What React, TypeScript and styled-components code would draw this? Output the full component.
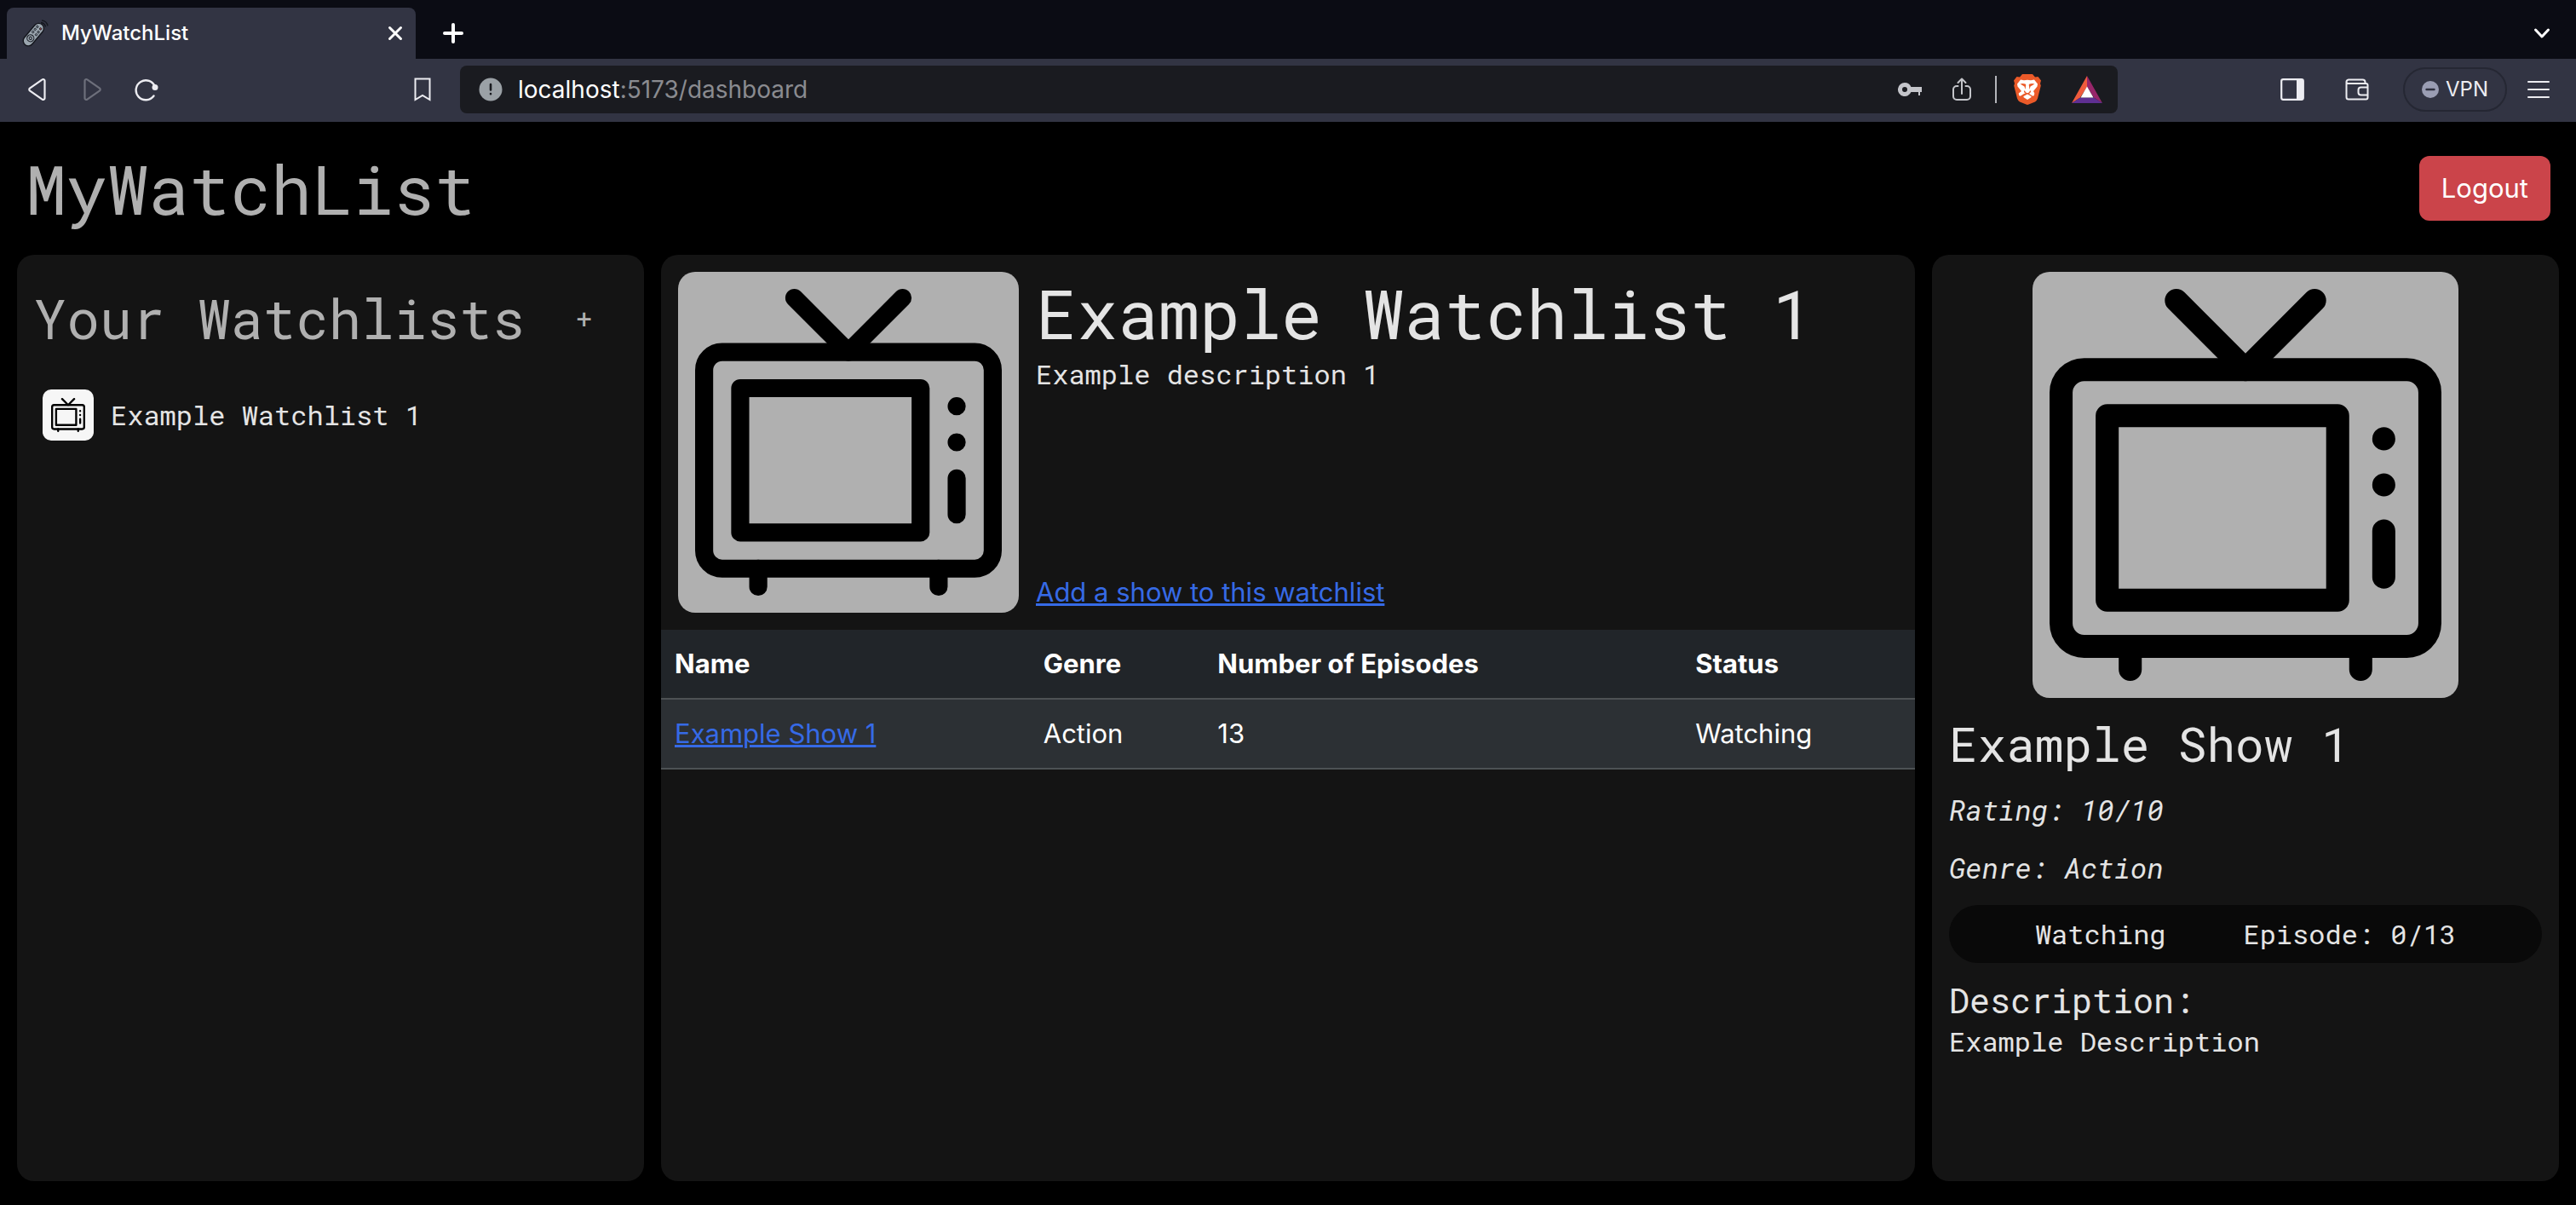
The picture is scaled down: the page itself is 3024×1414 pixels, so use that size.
import React from "react";
import styled, { createGlobalStyle } from "styled-components";

const mono = '"Roboto Mono", "Liberation Mono", monospace';
const sans = 'Inter, "Liberation Sans", sans-serif';

const GlobalStyle = createGlobalStyle`
  *, *::before, *::after { box-sizing: border-box; }
  body {
    margin: 0;
    background: #000;
    color: #e4e4e4;
    font-family: ${mono};
    font-size: 32px;
    font-weight: 450;
    line-height: 48px;
  }
  h1, h2, h3, p { margin: 0; font-weight: inherit; }
  button { font: inherit; color: inherit; background: none; border: 0; padding: 0; }
  svg { display: block; flex: none; }
`;

const Screen = styled.div`
  min-height: 100vh;
  display: flex;
  flex-direction: column;
`;

/* ---------- Browser window ---------- */

const TabStrip = styled.div`
  height: 69px;
  display: flex;
  align-items: flex-end;
  padding: 0 30px 0 8px;
  background: #0b0c14;
  color: #fff;
`;

const Tab = styled.div`
  width: 480px;
  height: 60px;
  display: flex;
  align-items: center;
  padding: 0 15px 0 16px;
  background: #323443;
  border-radius: 8px 8px 0 0;
  font: 500 24px/30px ${sans};
`;

const TabTitle = styled.span`
  flex: 1;
  padding-left: 15px;
`;

const StripButton = styled.button<{ $end?: boolean }>`
  height: 60px;
  display: flex;
  align-items: center;
  margin-left: ${(p) => (p.$end ? "auto" : "32px")};
`;

const Toolbar = styled.div`
  height: 74px;
  display: flex;
  align-items: center;
  gap: 48px;
  padding: 0 31px 2px 30px;
  background: #323443;
  color: #ececf1;
`;

const NavButtons = styled.div`
  flex: 0 1 476px;
  display: flex;
  align-items: center;
  gap: 36px;
`;

const IconButton = styled.button<{ $push?: boolean; $dim?: boolean }>`
  display: flex;
  margin-left: ${(p) => (p.$push ? "auto" : "0")};
  color: ${(p) => (p.$dim ? "#6d6f7b" : "inherit")};
`;

const AddressBar = styled.div`
  flex: 1;
  height: 56px;
  display: flex;
  align-items: center;
  gap: 36px;
  margin-left: -14px;
  padding: 0 18px 0 22px;
  background: #1a1b20;
  border-radius: 8px;
  color: #c4c5ca;
`;

const Address = styled.div`
  flex: 1;
  margin-left: -18px;
  color: #8a8b90;
  font: 400 28px/36px ${sans};
`;

const Host = styled.span`
  color: #fff;
`;

const Divider = styled.span`
  width: 2px;
  height: 32px;
  margin: 0 -16px 0 -8px;
  background: #b4b5ba;
`;

const ToolButtons = styled.div`
  flex: 0 1 459px;
  display: flex;
  align-items: center;
  justify-content: flex-end;
  gap: 48px;
`;

const VpnButton = styled.button`
  height: 52px;
  display: flex;
  align-items: center;
  gap: 8px;
  margin: 0 -24px 0 -8px;
  padding: 0 20px;
  border: 2px solid #252733;
  border-radius: 26px;
  font: 400 24px/30px ${sans};
`;

/* ---------- Page ---------- */

const Header = styled.header`
  display: flex;
  align-items: center;
  justify-content: space-between;
  padding: 30px;
`;

const SiteTitle = styled.h1`
  color: #b0b0b0;
  font-size: 80px;
  font-weight: 400;
  line-height: 96px;
`;

const LogoutButton = styled.button`
  padding: 14px 26px;
  background: #cb444a;
  border-radius: 12px;
  color: #fff;
  font-family: ${sans};
  font-size: 31px;
  font-weight: 400;
`;

const Columns = styled.main`
  flex: 1;
  display: grid;
  grid-template-columns: 1fr 2fr 1fr;
  gap: 20px;
  padding: 0 20px 28px;
`;

const Panel = styled.section<{ $inset?: boolean }>`
  min-width: 0;
  padding: ${(p) => (p.$inset ? "20px" : "0")};
  background: #141414;
  border-radius: 20px;
`;

const ListsHeading = styled.div`
  height: 108px;
  display: flex;
  align-items: center;
  gap: 34px;
  color: #b0b0b0;
  font-weight: 400;
`;

const ListsTitle = styled.h2`
  font-size: 64px;
  line-height: 76px;
`;

const AddButton = styled.button`
  padding: 14px 26px;
`;

const Lists = styled.ul`
  margin: 20px 0 0;
  padding: 0;
  list-style: none;
`;

const ListButton = styled.button`
  width: 100%;
  display: flex;
  align-items: center;
  gap: 20px;
  padding: 10px;
  text-align: left;
`;

const Poster = styled.div<{ $size: number; $small?: boolean }>`
  flex: none;
  width: ${(p) => p.$size}px;
  max-width: 100%;
  aspect-ratio: 1;
  padding: ${(p) => (p.$small ? 10 : 20)}px;
  background: ${(p) => (p.$small ? "#f6f6f6" : "#b0b0b0")};
  border-radius: ${(p) => (p.$small ? 10 : 20)}px;
`;

const ListSummary = styled.div`
  display: flex;
  gap: 20px;
  padding: 20px;
`;

const ListInfo = styled.div`
  display: flex;
  flex-direction: column;
  align-items: flex-start;
`;

const ListTitle = styled.h2`
  font-size: 80px;
  line-height: 96px;
`;

const Link = styled.a`
  color: #366ae6;
  font-family: ${sans};
  font-size: 31px;
  font-weight: 400;
  text-decoration: underline;
  text-decoration-thickness: 3px;
`;

const ListFooter = styled.div`
  margin-top: auto;
`;

const ShowTable = styled.table`
  width: 100%;
  table-layout: fixed;
  border-collapse: separate;
  border-spacing: 0;
  color: #fff;
  font-family: ${sans};
  font-size: 31px;
  font-weight: 400;
  text-align: left;
`;

const Column = styled.col<{ $share: number }>`
  width: ${(p) => p.$share}%;
`;

const HeadCell = styled.th`
  padding: 16px;
  background: #212529;
  border-bottom: 2px solid #4d5154;
  font-weight: 700;
`;

const Cell = styled.td`
  padding: 16px;
  background: #2c3034;
  border-bottom: 2px solid #4d5154;
`;

const ShowPanel = styled(Panel)`
  display: flex;
  flex-direction: column;
  gap: 20px;
`;

const PosterFrame = styled.div`
  display: flex;
  justify-content: center;
`;

const ShowTitle = styled.h2`
  font-size: 56px;
  line-height: 67px;
`;

const Fact = styled.p`
  font-size: 33px;
  font-style: italic;
`;

const Progress = styled.div`
  display: flex;
  justify-content: space-evenly;
  padding: 10px;
  background: #090909;
  border-radius: 34px;
`;

const DescriptionTitle = styled.h3`
  font-size: 40px;
  line-height: 48px;
`;

/* ---------- Drawings ---------- */

const Television = () => (
  <svg viewBox="0 0 17 17" width="100%" height="100%" fill="none" stroke="#000" strokeLinecap="round" strokeLinejoin="round" aria-hidden="true">
    <path d="M5.5.5l3 3 3-3" />
    <rect x=".5" y="3.5" width="16" height="12" rx="1" />
    <rect x="2.5" y="5.5" width="10" height="8" />
    <path d="M14.5 6.5v0M14.5 8.5v0M14.5 10.5v2M3.5 15.5v1M13.5 15.5v1" />
  </svg>
);

const RemoteIcon = () => (
  <svg width="33" height="33" viewBox="0 0 33 33" aria-hidden="true">
    <g transform="rotate(40 15 18)">
      <rect x="9" y="2" width="12" height="31" rx="6" fill="#9aa5ae" stroke="#14161d" strokeWidth="1.4" />
      <circle cx="15" cy="23" r="4" fill="none" stroke="#20232c" strokeWidth="1.2" />
      <circle cx="15" cy="23" r="1.6" fill="none" stroke="#20232c" />
      <g fill="#7b8790" stroke="#20232c" strokeWidth=".9">
        <circle cx="12.5" cy="15.5" r="1.2" /><circle cx="17.5" cy="15.5" r="1.2" />
        <circle cx="12.5" cy="11.5" r="1.2" /><circle cx="17.5" cy="11.5" r="1.2" />
        <circle cx="12.5" cy="7.5" r="1.2" /><circle cx="17" cy="7" r="1.2" fill="#a8433f" />
      </g>
    </g>
    <path d="M24 3.5q4.5 .5 5.5 5M25 .8q6 .8 7 6.5" fill="none" stroke="#14161d" strokeWidth="1.3" />
  </svg>
);

const CloseIcon = () => (
  <svg width="18" height="18" viewBox="0 0 18 18" fill="none" stroke="currentColor" strokeWidth="3" strokeLinecap="round" aria-hidden="true">
    <path d="M2.5 2.5l13 13M15.5 2.5l-13 13" />
  </svg>
);

const PlusIcon = () => (
  <svg width="24" height="24" viewBox="0 0 24 24" fill="none" stroke="currentColor" strokeWidth="4" strokeLinecap="round" aria-hidden="true">
    <path d="M12 2v20M2 12h20" />
  </svg>
);

const ChevronIcon = () => (
  <svg width="20" height="14" viewBox="0 0 20 14" fill="none" stroke="currentColor" strokeWidth="3" strokeLinecap="round" strokeLinejoin="round" aria-hidden="true">
    <path d="M2.5 3l7.5 8 7.5-8" />
  </svg>
);

const TriangleIcon = ({ flip = false }: { flip?: boolean }) => (
  <svg width="28" height="28" viewBox="0 0 28 28" fill="none" stroke="currentColor" strokeWidth="2.2" strokeLinejoin="round" aria-hidden="true">
    <path
      transform={flip ? "matrix(-1 0 0 1 28 0)" : undefined}
      d="M22.5 3.8v20.4a1.8 1.8 0 0 1-2.9 1.4L4.9 15.3a1.7 1.7 0 0 1 0-2.6L19.6 2.4a1.8 1.8 0 0 1 2.9 1.4z"
    />
  </svg>
);

const ReloadIcon = () => (
  <svg width="28" height="28" viewBox="0 0 28 28" fill="none" stroke="currentColor" strokeWidth="2.4" strokeLinecap="round" aria-hidden="true">
    <path d="M22.5 21.5A11.5 11.5 0 1 1 24 11" />
    <circle cx="24" cy="11.5" r="3.5" fill="currentColor" stroke="none" />
  </svg>
);

const BookmarkIcon = () => (
  <svg width="20" height="28" viewBox="0 0 20 28" fill="none" stroke="currentColor" strokeWidth="2" aria-hidden="true">
    <path d="M1.5 1.5h17v24.5L10 20.8 1.5 26z" />
  </svg>
);

const InfoIcon = () => (
  <svg width="28" height="28" viewBox="0 0 28 28" aria-hidden="true">
    <circle cx="14" cy="14" r="13.5" fill="#9ba1a6" />
    <path d="M14 8v6.5M14 19v.2" stroke="#1a1b20" strokeWidth="2.6" strokeLinecap="round" />
  </svg>
);

const KeyIcon = () => (
  <svg width="28" height="16" viewBox="0 0 28 16" aria-hidden="true">
    <path fill="currentColor" fillRule="evenodd" d="M8 0a8 8 0 0 1 7.4 5H28v10h-4v-4h-8.6A8 8 0 1 1 8 0zm0 5a3 3 0 1 0 0 6 3 3 0 0 0 0-6zM26 11h2v4h-2z" />
  </svg>
);

const ShareIcon = () => (
  <svg width="22" height="28" viewBox="0 0 22 28" fill="none" stroke="currentColor" strokeWidth="2" strokeLinecap="round" strokeLinejoin="round" aria-hidden="true">
    <path d="M11 19V2M6.5 6L11 1.5 15.5 6M6.5 10H5a4 4 0 0 0-4 4v8a4 4 0 0 0 4 4h12a4 4 0 0 0 4-4v-8a4 4 0 0 0-4-4h-1.5" />
  </svg>
);

const BraveIcon = () => (
  <svg width="32" height="36" viewBox="0 0 32 36" aria-hidden="true">
    <path fill="#eb5a29" d="M10 0h12l3 3.5 3.5-.5L32 7.5l-1 3.5.8 2.5-3.8 15q-.8 2.5-3 4L17.5 35.500q-1.5.9-3 0L7 32.5q-2.200-1.5-3-4L.2 13.5 1 11 0 7.500 3.5 3 7 3.5z" />
    <path fill="#fff" d="M8 6.5l4 .8q4-.9 8 0l4-.8 4 5-.5 3-4.500 5.500 1.300 2.500q.3 2.500-2 3.300l-4.300-2.800-3-1-3 1-4.300 2.800q-2.300-.8-2-3.300L9 20 4.500 14.500l-.5-3z" />
    <path fill="#eb5a29" d="M7.5 11.500q3-1 6 0l.8 1-.8 5.500-1-3.500zM24.500 11.500q-3-1-6 0l-.8 1 .8 5.500 1-3.500z" />
    <path fill="none" stroke="#eb5a29" strokeWidth="1.300" d="M12.500 19.500q0 2.500 3.500 3.500 3.500-1 3.500-3.500" />
    <path fill="#fff" d="M16 23.500l4.500 2.500q.3.600-.2 1.200L16 30l-4.300-2.800q-.5-.6-.2-1.200z" />
  </svg>
);

const RewardsIcon = () => (
  <svg width="36" height="32" viewBox="0 0 36 32" aria-hidden="true">
    <path fill="#ef5b3c" d="M18 0v13l-8 12.5L0 32z" />
    <path fill="#97266a" d="M18 0l18 32-10-6.5L18 13z" />
    <path fill="#5f2f92" d="M0 32l10-6.5h16L36 32z" />
    <path fill="#fff" d="M18 12.5l7.5 13h-15z" />
  </svg>
);

const SidebarIcon = () => (
  <svg width="28" height="26" viewBox="0 0 28 26" aria-hidden="true">
    <rect x="1.2" y="1.2" width="25.6" height="23.6" rx="2" fill="none" stroke="currentColor" strokeWidth="2.2" />
    <path d="M19 1h7q1 0 1 1v22q0 1-1 1h-7z" fill="currentColor" />
  </svg>
);

const WalletIcon = () => (
  <svg width="28" height="26" viewBox="0 0 28 26" fill="none" stroke="currentColor" strokeWidth="2" strokeLinejoin="round" aria-hidden="true">
    <path d="M1.5 4V22a2.5 2.5 0 0 0 2.5 2.5h20.5a2 2 0 0 0 2-2V8a2 2 0 0 0-2-2H3.5Q1.5 6 1.5 4T4 1.5h16.5a3 3 0 0 1 3 3V6" />
    <path d="M26.5 10.5h-8a3 3 0 0 0-3 3v3a3 3 0 0 0 3 3h8" />
  </svg>
);

const VpnStateIcon = () => (
  <svg width="20" height="20" viewBox="0 0 20 20" aria-hidden="true">
    <circle cx="10" cy="10" r="10" fill="#9a9db3" />
    <path d="M5.5 10h9" stroke="#2f3140" strokeWidth="2.4" strokeLinecap="round" />
  </svg>
);

const MenuIcon = () => (
  <svg width="26" height="20" viewBox="0 0 26 20" fill="none" stroke="currentColor" strokeWidth="2" strokeLinecap="round" aria-hidden="true">
    <path d="M1 1h24M1 10h24M1 19h24" />
  </svg>
);

/* ---------- Data ---------- */

const watchlist = { name: "Example Watchlist 1", description: "Example description 1" };

const show = {
  name: "Example Show 1",
  genre: "Action",
  episodes: 13,
  watched: 0,
  rating: 10,
  status: "Watching",
  description: "Example Description",
};

const columns = [
  { label: "Name", share: 29.4 },
  { label: "Genre", share: 13.9 },
  { label: "Number of Episodes", share: 38.1 },
  { label: "Status", share: 18.6 },
];

const Browser = () => (
  <div>
    <TabStrip>
      <Tab>
        <RemoteIcon />
        <TabTitle>MyWatchList</TabTitle>
        <IconButton aria-label="Close tab"><CloseIcon /></IconButton>
      </Tab>
      <StripButton aria-label="New tab"><PlusIcon /></StripButton>
      <StripButton $end aria-label="Search tabs"><ChevronIcon /></StripButton>
    </TabStrip>
    <Toolbar>
      <NavButtons>
        <IconButton aria-label="Back"><TriangleIcon /></IconButton>
        <IconButton $dim aria-label="Forward"><TriangleIcon flip /></IconButton>
        <IconButton aria-label="Reload"><ReloadIcon /></IconButton>
        <IconButton $push aria-label="Bookmark this page"><BookmarkIcon /></IconButton>
      </NavButtons>
      <AddressBar>
        <InfoIcon />
        <Address><Host>localhost</Host>:5173/dashboard</Address>
        <IconButton aria-label="Passwords"><KeyIcon /></IconButton>
        <IconButton aria-label="Share"><ShareIcon /></IconButton>
        <Divider />
        <IconButton aria-label="Shields"><BraveIcon /></IconButton>
        <IconButton aria-label="Rewards"><RewardsIcon /></IconButton>
      </AddressBar>
      <ToolButtons>
        <IconButton aria-label="Sidebar"><SidebarIcon /></IconButton>
        <IconButton aria-label="Wallet"><WalletIcon /></IconButton>
        <VpnButton><VpnStateIcon />VPN</VpnButton>
        <IconButton aria-label="Menu"><MenuIcon /></IconButton>
      </ToolButtons>
    </Toolbar>
  </div>
);

export default function App() {
  return (
    <Screen>
      <GlobalStyle />
      <Browser />
      <Header>
        <SiteTitle>MyWatchList</SiteTitle>
        <LogoutButton>Logout</LogoutButton>
      </Header>
      <Columns>
        <Panel $inset>
          <ListsHeading>
            <ListsTitle>Your Watchlists</ListsTitle>
            <AddButton aria-label="Add a watchlist">+</AddButton>
          </ListsHeading>
          <Lists>
            <li>
              <ListButton>
                <Poster as="span" $size={60} $small><Television /></Poster>
                {watchlist.name}
              </ListButton>
            </li>
          </Lists>
        </Panel>

        <Panel>
          <ListSummary>
            <Poster $size={400}><Television /></Poster>
            <ListInfo>
              <ListTitle>{watchlist.name}</ListTitle>
              <p>{watchlist.description}</p>
              <ListFooter><Link href="#add-show">Add a show to this watchlist</Link></ListFooter>
            </ListInfo>
          </ListSummary>
          <ShowTable>
            <colgroup>
              {columns.map((c) => <Column key={c.label} $share={c.share} />)}
            </colgroup>
            <thead>
              <tr>{columns.map((c) => <HeadCell key={c.label} scope="col">{c.label}</HeadCell>)}</tr>
            </thead>
            <tbody>
              <tr>
                <Cell><Link href="#show">{show.name}</Link></Cell>
                <Cell>{show.genre}</Cell>
                <Cell>{show.episodes}</Cell>
                <Cell>{show.status}</Cell>
              </tr>
            </tbody>
          </ShowTable>
        </Panel>

        <ShowPanel $inset>
          <PosterFrame><Poster $size={500}><Television /></Poster></PosterFrame>
          <ShowTitle>{show.name}</ShowTitle>
          <Fact>Rating: {show.rating}/10</Fact>
          <Fact>Genre: {show.genre}</Fact>
          <Progress>
            <span>{show.status}</span>
            <span>Episode: {show.watched}/{show.episodes}</span>
          </Progress>
          <div>
            <DescriptionTitle>Description:</DescriptionTitle>
            <p>{show.description}</p>
          </div>
        </ShowPanel>
      </Columns>
    </Screen>
  );
}
